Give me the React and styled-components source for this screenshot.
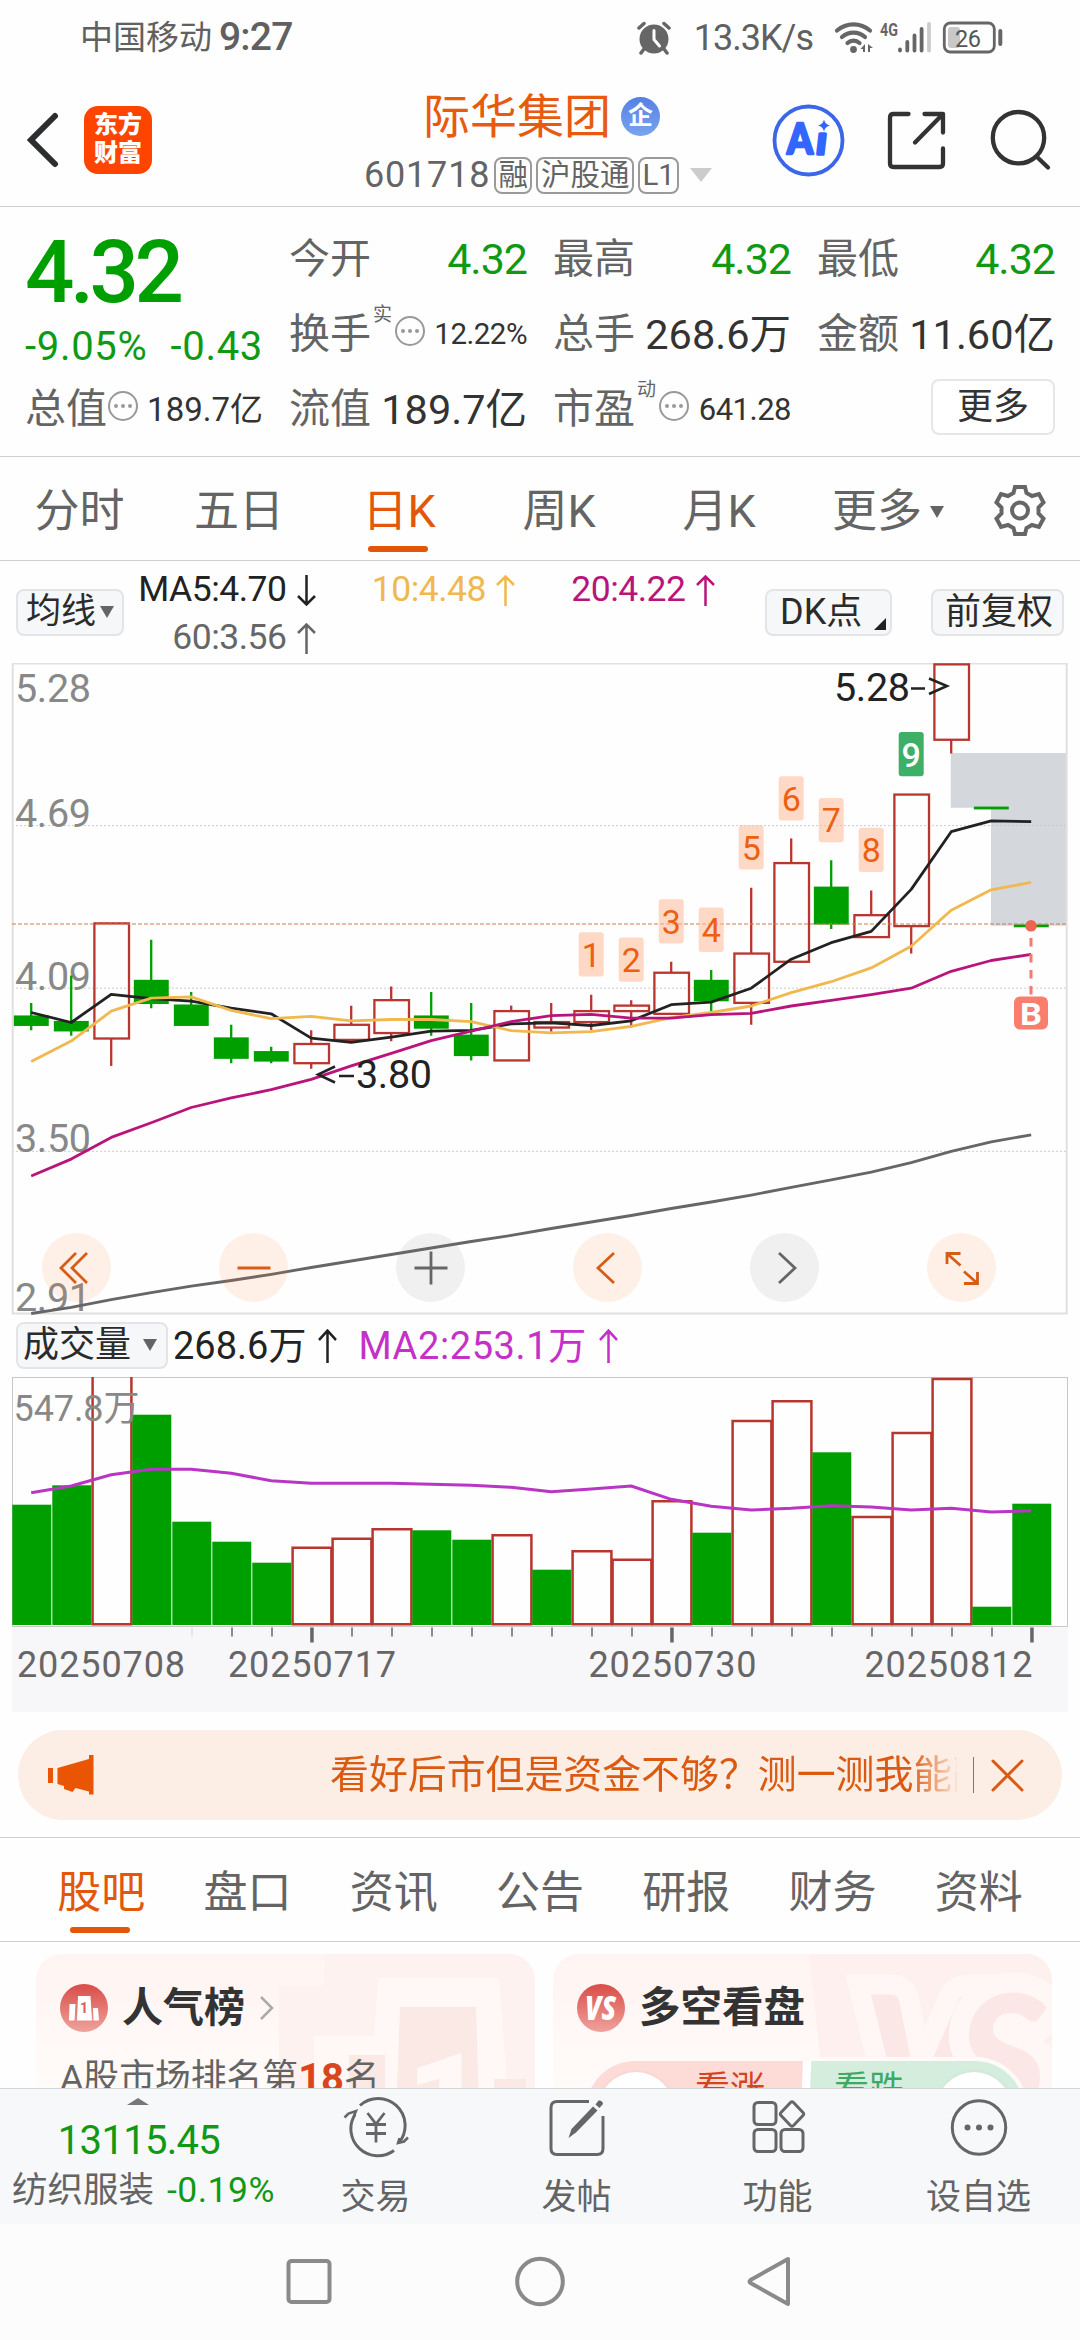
import styled, { createGlobalStyle, css } from 'styled-components'

const GREEN = '#009f00'
const TEXT_GREEN = '#109a14'
const RED = '#b9352f'
const ORANGE = '#e2570b'
const GREY = '#646464'
const INK = '#2b2b2b'

const GlobalStyle = createGlobalStyle`
* {
box-sizing: border-box;
}
body {
margin: 0;
background-color: #fff;
font-family: Roboto, 'Noto Sans CJK SC', sans-serif;
line-height: 1;
color: ${INK};
}
svg {
display: block;
flex: none;
}
`

const Page = styled.div`
width: 1080px;
height: 2340px;
display: flex;
flex-direction: column;
background-color: #fefefe;
overflow: hidden;
white-space: nowrap;
`

const T = styled.span`
font-size: ${p => p.$size}px;
color: ${p => p.$color || INK};
font-weight: ${p => p.$weight || 400};
letter-spacing: ${p => p.$ls || 0}px;
line-height: 1;
`

/* ---------- status bar ---------- */

const StatusBar = styled.header`
height: 75px;
padding: 0 76px 0 80px;
display: flex;
align-items: center;
justify-content: space-between;
`
const StatusGroup = styled.div`
display: flex;
align-items: center;
`
const Carrier = styled(T)`
margin-right: 7px;
`
const Speed = styled(T)`
margin: 0 21px 0 23px;
`

function StatusIcons() {
  return (
    <svg width="170" height="36" viewBox="833 19 170 36" fill="none">
      <g stroke="#666" strokeWidth="4.2" strokeLinecap="round">
        <path d="M836 29.5a25 25 0 0 1 33 0" />
        <path d="M841 36a17.5 17.5 0 0 1 23 0" />
        <path d="M846.5 42a9 9 0 0 1 12 0" />
      </g>
      <circle cx="852.5" cy="48.5" r="3.4" fill="#666" />
      <path d="M864 43v8h-2v-3h-2.5zM867 43v8h2v-4h3z" fill="#666" />
      <text x="879" y="34.5" fontSize="18" fontWeight="700" fill="#666" textLength="18" lengthAdjust="spacingAndGlyphs">4G</text>
      <g strokeWidth="3.8" strokeLinecap="round">
        <path d="M899 48.5v1M906.3 41v8.5M913.5 34.500v15M920.6 28v21.500" stroke="#666" />
        <path d="M928 23v26.500" stroke="#ccc" />
      </g>
      <rect x="947" y="26" width="12" height="21" rx="3" fill="#c8c8c8" />
      <rect x="943.300" y="22" width="50" height="29" rx="6" stroke="#666" strokeWidth="2.800" />
      <path d="M999.300 30v13" stroke="#666" strokeWidth="4" strokeLinecap="round" />
      <text x="954" y="45.500" fontSize="23.500" fill="#555" textLength="26">26</text>
    </svg>
  )
}

function AlarmIcon() {
  return (
    <svg width="34" height="34" viewBox="0 0 34 34" fill="none">
      <circle cx="17" cy="18" r="14.500" fill="#666" />
      <path d="M2 7l5-4.500M32 7l-5-4.500M7 28l-3 4M27 28l3 4" stroke="#666" strokeWidth="3.500" strokeLinecap="round" />
      <path d="M17 9.500v9l5.500 6.500" stroke="#fff" strokeWidth="3" strokeLinecap="round" strokeLinejoin="round" />
    </svg>
  )
}

/* ---------- header ---------- */

const Header = styled.div`
height: 132px;
padding: 0 28px 0 26px;
border-bottom: 1px solid #d0d0d0;
display: grid;
grid-template-columns: 338px 1fr 280px;
`
const HeaderLeft = styled.div`
display: flex;
align-items: center;
gap: 24px;
padding-bottom: 2px;
`
const Logo = styled.div`
width: 68px;
height: 68px;
border-radius: 14px;
background-color: #ff4400;
color: #fff;
font-weight: 800;
font-size: 24px;
line-height: 28.500px;
text-align: center;
padding-top: 5px;
`
const HeaderTitle = styled.div`
display: flex;
flex-direction: column;
`
const NameLine = styled.div`
height: 77px;
padding: 5px 0 0 59px;
display: flex;
align-items: center;
`
const EnterpriseBadge = styled.span`
width: 39px;
height: 39px;
border-radius: 50%;
margin-left: 10px;
background-image: linear-gradient(#5580e6, #79a4ee);
color: #fff;
font-size: 25px;
font-weight: 700;
line-height: 38px;
text-align: center;
`
const CodeLine = styled.div`
height: 46px;
display: flex;
align-items: center;
gap: 4px;
`
const Tag = styled.span`
height: 37px;
border: 2px solid #9a9a9a;
border-radius: 8px;
width: ${p => p.$w}px;
font-size: 29.500px;
line-height: 32px;
display: flex;
justify-content: center;
color: ${GREY};
`
const HeaderIcons = styled.div`
display: flex;
align-items: center;
justify-content: flex-end;
padding-bottom: 2px;
`

function HeaderActions() {
  return (
    <HeaderIcons>
      <svg width="282" height="76" viewBox="770 101 282 76" fill="none">
        <circle cx="808.500" cy="139.500" r="34" stroke="#3c66e8" strokeWidth="3.800" />
        <text x="787" y="153" fontFamily="Lato" fontWeight="900" fontSize="42" fill="#3366ff" stroke="#3366ff" strokeWidth="2.500" strokeLinejoin="round" textLength="26" lengthAdjust="spacingAndGlyphs">A</text>
        <text x="817" y="153" fontFamily="Lato" fontWeight="900" fontStyle="italic" fontSize="37" fill="#3366ff" stroke="#3366ff" strokeWidth="3.500" strokeLinejoin="round">ı</text>
        <path d="M824 118.500q1.200 5 6 6-4.800 1.200-6 6-1.200-4.800-6-6 4.800-1 6-6z" fill="#3366ff" />
        <g stroke="#333" strokeWidth="4.300" strokeLinecap="round" strokeLinejoin="round">
          <path d="M908.500 113h-15q-3.500 0-3.500 3.500v46q0 3.500 3.500 3.500h46q3.500 0 3.500-3.500v-15" />
          <path d="M924.500 113h18.500v18.500M943 113l-28 28.500" />
          <circle cx="1018.500" cy="136.700" r="25.700" />
          <path d="M1036.500 155.500l11.500 11" />
        </g>
      </svg>
    </HeaderIcons>
  )
}

/* ---------- quote ---------- */

const Quote = styled.section`
height: 250px;
border-bottom: 1px solid #d0d0d0;
padding: 15px 24px 0 25px;
display: grid;
grid-template-columns: repeat(4, 238px);
grid-template-rows: 75px 75px 75px;
column-gap: 26px;
`
const BigPrice = styled.div`
grid-row: 1 / span 2;
display: flex;
flex-direction: column;
`
const PriceRow = styled.div`
height: 100px;
display: flex;
align-items: center;
`
const ChangeRow = styled.div`
display: flex;
justify-content: space-between;
align-items: center;
height: 49px;
`
const Cell = styled.div`
display: flex;
align-items: center;
justify-content: space-between;
`
const Label = styled.span`
display: flex;
align-items: center;
font-size: 41px;
color: ${GREY};
`
const Sup = styled.span`
font-size: 19px;
height: 60px;
margin-left: 2px;
margin-right: 2px;
`
const DotsBadge = styled.span`
width: 30px;
height: 30px;
margin: -8px 0 0 1px;
border: 2.500px solid #999;
border-radius: 50%;
display: flex;
align-items: center;
justify-content: center;
gap: 3px;
&::before, &::after, i {
content: '';
width: 4px;
height: 4px;
border-radius: 50%;
background-color: #999;
}
`
const MoreButton = styled.button`
width: 124px;
height: 56px;
margin: -5px 0 0 auto;
padding: 0;
border: 2px solid #e4e6e8;
border-radius: 8px;
background-color: #fff;
font: inherit;
font-size: 36px;
color: #333;
`

const stats = [
  { label: '今开', value: '4.32', size: 43, color: TEXT_GREEN, ls: -1 },
  { label: '最高', value: '4.32', size: 43, color: TEXT_GREEN, ls: -1 },
  { label: '最低', value: '4.32', size: 43, color: TEXT_GREEN, ls: -1 },
  { label: '换手', sup: '实', dots: true, value: '12.22%', size: 29.5, ls: -0.5 },
  { label: '总手', value: '268.6万', size: 41.5 },
  { label: '金额', value: '11.60亿', size: 41.5 },
  { label: '总值', dots: true, value: '189.7亿', size: 33 },
  { label: '流值', value: '189.7亿', size: 41.5 },
  { label: '市盈', sup: '动', dots: true, value: '641.28', size: 31, ls: -0.5 }
]

/* ---------- tabs ---------- */

const Tabs = styled.nav`
height: 104px;
border-bottom: 1px solid #d0d0d0;
padding: 0 ${p => p.$pad}px;
display: flex;
`
const Tab = styled.span`
position: relative;
width: ${p => p.$w}px;
padding-top: 6px;
display: flex;
align-items: center;
justify-content: center;
font-size: ${p => p.$size || 45}px;
color: ${GREY};
${p => p.$active && css`
color: ${ORANGE};
&::after {
content: '';
position: absolute;
left: 50%;
bottom: 8px;
width: 60px;
height: 6px;
margin-left: -31px;
border-radius: 3px;
background-color: #e25608;
}
`}
`
const Caret = styled.i`
border: solid transparent;
border-width: ${p => p.$h || 12}px ${p => p.$half || 7.5}px 0;
border-top-color: ${p => p.$color || GREY};
margin-left: ${p => p.$ml || 0}px;
`

function GearIcon() {
  return (
    <svg width="54" height="54" viewBox="-28 -25.500 54 54" fill="none" stroke="#666" strokeWidth="4" strokeLinejoin="miter">
      <path d="M-5 -23.500H5L6.500 -17.500L12 -14.500L19 -16.500L23.500 -8L18.500 -3V3L23.500 8L19 16.500L12 14.500L6.500 17.500L5 23.500H-5L-6.500 17.500L-12 14.500L-19 16.500L-23.500 8L-18.500 3V-3L-23.500 -8L-19 -16.500L-12 -14.500L-6.500 -17.500Z" />
      <circle r="8" />
    </svg>
  )
}

/* ---------- moving averages ---------- */

const Legend = styled.div`
height: 102px;
padding: 0 16px;
display: flex;
align-items: center;
`
const Chip = styled.span`
width: ${p => p.$w}px;
height: 47px;
padding: 0 0 1px ${p => p.$pl}px;
margin-left: ${p => p.$ml || 0}px;
border: 2px solid #e2e4e7;
border-radius: 8px;
background-color: #f6f7f9;
display: flex;
align-items: center;
font-size: ${p => p.$size || 36}px;
`
const Averages = styled.div`
width: 641px;
height: 96px;
margin-left: -8px;
display: grid;
grid-template-columns: repeat(3, 199.500px);
grid-template-rows: 48px 48px;
padding-top: 2px;
`
const Average = styled.span`
display: flex;
align-items: center;
justify-content: flex-end;
gap: 10px;
font-size: 35.500px;
letter-spacing: -0.500px;
color: ${p => p.$color};
`
const Corner = styled.i`
margin: 24px 4px 0 auto;
border: solid transparent;
border-width: 0 0 12px 12px;
border-bottom-color: #222;
`

function Arrow({ down, big }) {
  const h = big ? 34 : 31
  return (
    <svg width="19" height={h} viewBox="0 0 19 31" preserveAspectRatio="none" fill="none" stroke="currentColor" strokeWidth="2.500">
      <path d={down ? 'M9.500 0v29.500M1 21l8.500 8.500L18 21' : 'M9.500 31V1.500M1 10l8.500-8.500L18 10'} />
    </svg>
  )
}

/* ---------- candles ---------- */

const TOP_PRICE = 5.28
const PX_PER_UNIT = 274.1
const cx = i => 31.200 + 40 * i
const py = price => (TOP_PRICE - price) * PX_PER_UNIT

// [up, high, top, bottom, low]
const candles = [
  [0, 4.04, 3.99, 3.96, 3.94], [0, 4.14, 3.97, 3.94, 3.92], [1, 4.33, 4.33, 3.91, 3.81],
  [0, 4.27, 4.12, 4.04, 4.02], [0, 4.08, 4.03, 3.96, 3.96], [0, 3.96, 3.91, 3.84, 3.82],
  [0, 3.88, 3.86, 3.83, 3.82], [1, 3.94, 3.89, 3.82, 3.8], [1, 4.03, 3.96, 3.905, 3.9],
  [1, 4.1, 4.05, 3.93, 3.9], [0, 4.08, 3.99, 3.95, 3.92], [0, 4.04, 3.92, 3.85, 3.83],
  [1, 4.03, 4.01, 3.83, 3.83], [1, 4.04, 3.97, 3.95, 3.935], [1, 4.07, 4.01, 3.97, 3.94],
  [1, 4.05, 4.03, 4.01, 3.95], [1, 4.19, 4.15, 4, 4], [0, 4.16, 4.12, 4.05, 4.01],
  [1, 4.46, 4.22, 4.04, 3.96], [1, 4.64, 4.55, 4.19, 4.19], [0, 4.56, 4.46, 4.33, 4.31],
  [1, 4.45, 4.36, 4.28, 4.28], [1, 4.8, 4.8, 4.32, 4.22], [1, 5.275, 5.275, 5, 4.95],
  [0, 4.752, 4.752, 4.75, 4.75], [0, 4.322, 4.322, 4.32, 4.32]
]

const averages = [
  { color: '#666', ys: [650.5, 644.4, 636.6, 629.7, 623.2, 617.5, 611.4, 604.5, 598, 591.5, 585, 578.5, 572.4, 565.5, 559, 552.5, 545.5, 539, 532.1, 524.3, 516.9, 509.1, 499.6, 488.3, 478.8, 471.8] },
  { color: '#222', ys: [349.5, 359.5, 331.3, 335.6, 338.2, 345.2, 350.8, 375.1, 379.4, 374.2, 368.2, 367.3, 360.8, 359.9, 362.5, 357.8, 341.7, 339.1, 325.2, 296.2, 279.7, 268.4, 226.4, 168.7, 157.8, 158.7] },
  { color: '#f0b84e', ys: [398.5, 378.1, 348.2, 335.2, 333.9, 347.4, 355.6, 353.4, 357.8, 356.5, 356.5, 358.6, 367.7, 369.9, 368.6, 363.4, 354.7, 349.5, 343, 329.6, 318.7, 304.9, 283.2, 247.2, 226.8, 219.4] },
  { color: '#b9147c', ys: [513, 496.1, 474.4, 459.7, 444.5, 434.9, 426.7, 416.3, 402.9, 390.3, 377.7, 368.2, 358.6, 352.6, 351.3, 355.2, 355.2, 351.7, 350.4, 343, 337.4, 331.7, 325.2, 308.3, 297.5, 291.4] }
]

const priceLabels = [['5.28', 39], ['4.69', 164], ['4.09', 327], ['3.50', 489], ['2.91', 648]]
const countTops = [269.3, 274.5, 236.3, 244.6, 162.2, 113.2, 134.9, 164.8, 69]

const points = ys => ys.map((y, i) => `${cx(i)},${y}`).join(' ')

const ChartBox = styled.section`
position: relative;
height: 652px;
`
const Controls = styled.div`
position: absolute;
left: 42px;
bottom: 13px;
display: flex;
gap: 108px;
`
const Control = styled.span`
width: 69px;
height: 69px;
border-radius: 50%;
background-color: ${p => (p.$muted ? 'rgba(120, 120, 120, 0.1)' : 'rgba(255, 125, 50, 0.11)')};
color: ${p => (p.$muted ? '#666' : '#d75c17')};
display: flex;
align-items: center;
justify-content: center;
`

const controls = [
  { d: 'M18 4L3 19l15 15M29 4L14 19l15 15' },
  { d: 'M2.500 19h33' },
  { d: 'M2.500 19h33M19 2.500v33', muted: true },
  { d: 'M25 4L9 19l16 15' },
  { d: 'M13 4l16 15-16 15', muted: true },
  { d: 'M4 15V4.500h13.500M4.500 5l13 11.500M34.500 23v11.500H21M34 34L21 22.500' }
]

function CandleChart() {
  return (
    <ChartBox>
      <svg width="1080" height="652" viewBox="0 0 1080 652" fill="none">
        <path d="M950.800 90H1067v172.800H991V144.700H950.800z" fill="#d4d7dc" />
        {[162.6, 325.2, 488.3].map(y => (
          <path key={y} d={`M12 ${y}H1067`} stroke="#ccc" strokeWidth="1" strokeDasharray="2 2" />
        ))}
        <rect x="12.700" y="0.500" width="1054" height="650" stroke="#e0e0e0" strokeWidth="2" />
        {priceLabels.map(([label, y]) => (
          <text key={label} x="15" y={y} fontSize="39.500" fill="#888" textLength="76">{label}</text>
        ))}
        {candles.map(([up, high, top, bottom, low], i) => (
          <g key={i} stroke={up ? RED : GREEN} strokeWidth="2.300">
            <path d={`M${cx(i)} ${py(high)}V${py(top)}M${cx(i)} ${py(bottom)}V${py(low)}`} />
            <rect
              x={cx(i) - (up ? 16.8 : 16.2)}
              y={py(top)}
              width={up ? 34.6 : 32.6}
              height={py(bottom) - py(top)}
              fill={up ? 'none' : GREEN}
            />
          </g>
        ))}
        <path d="M12 261H1067" stroke="#cf7b4e" strokeWidth="1.200" strokeDasharray="4 2" />
        {averages.map(({ color, ys }) => (
          <polyline key={color} points={points(ys)} stroke={color} strokeWidth="2.800" strokeLinejoin="round" />
        ))}
        {countTops.map((y, i) => {
          const last = i === 8
          const x = cx(i + 14)
          return (
            <g key={i}>
              <rect x={x - 12.5} y={y} width="25" height="44.300" rx="3" fill={last ? '#3daf66' : 'rgba(255, 185, 150, 0.55)'} />
              <text x={x} y={y + 34.500} fontSize="34" textAnchor="middle" fill={last ? '#fff' : '#ec5f14'} fontWeight={last ? 500 : 400}>{i + 1}</text>
            </g>
          )
        })}
        <g fontSize="39.500" fill="#222">
          <text x="356" y="425" textLength="76">3.80</text>
          <text x="834" y="37.500" textLength="76">5.28</text>
        </g>
        <path d="M335 403.500L318 411.500L335 419.500M339 413h15" stroke="#222" strokeWidth="2.500" />
        <path d="M929 15.500L947 23L929 31M911 25.500h14" stroke="#222" strokeWidth="2.500" />
        <circle cx="1031" cy="262.800" r="5.800" fill="#ee6450" />
        <path d="M1031 275v57" stroke="#ef7d6d" strokeWidth="3" strokeDasharray="8.500 7.500" />
        <rect x="1014" y="333.500" width="34" height="33" rx="6" fill="#f97e6d" />
        <text x="1020" y="361.500" fontSize="32" fontWeight="700" fill="#fff" textLength="22" lengthAdjust="spacingAndGlyphs">B</text>
      </svg>
      <Controls>
        {controls.map(({ d, muted }) => (
          <Control key={d} $muted={muted}>
            <svg width="38" height="38" viewBox="0 0 38 38" fill="none" stroke="currentColor" strokeWidth="2.800">
              <path d={d} />
            </svg>
          </Control>
        ))}
      </Controls>
    </ChartBox>
  )
}

/* ---------- volume ---------- */

const VolumeLegend = styled.div`
height: 62px;
padding: 0 16px 1px;
display: flex;
align-items: center;
`
const VolumeText = styled.span`
display: flex;
align-items: center;
gap: 12px;
margin-left: ${p => p.$ml}px;
font-size: 38px;
letter-spacing: ${p => p.$ls || 0}px;
color: ${p => p.$color};
`

// [up, top edge of the bar]
const volumes = [
  [0, 127.7], [0, 108.3], [1, -3], [0, 37.7], [0, 144.7], [0, 164.7], [0, 185.7],
  [1, 170.7], [1, 161.7], [1, 152.3], [0, 153.3], [0, 162.7], [1, 158.3], [0, 192.7],
  [1, 174.3], [1, 182.7], [1, 124.3], [0, 155.7], [1, 44], [1, 24.3], [0, 75.3],
  [1, 140], [1, 56], [1, 2], [0, 229.7], [0, 126.7]
]
const volumeAverage = [115.7, 109, 97.7, 92.3, 92.3, 96.3, 103.7, 106.3, 106.3, 106.3, 107.3, 108.3, 110.3, 114.7, 112, 109, 122.3, 129.3, 133, 131.3, 128.7, 130, 133, 131.3, 135, 133.7]
const dates = [['20250708', 17], ['20250717', 228], ['20250730', 588.5], ['20250812', 864.5]]

function VolumeChart() {
  return (
    <svg width="1080" height="335" viewBox="0 0 1080 335" fill="none">
      <rect x="12" y="250" width="1056" height="85" fill="#f7f7fa" />
      <rect x="12.500" y="0.500" width="1055" height="249" stroke="#c8c8c8" />
      {volumes.map(([up, y], i) => (
        up
          ? <path key={i} d={`M${12.6 + 40 * i} ${Math.max(y, 0)}V247.300h38.800V${Math.max(y, 0)}${y > 0 ? 'z' : ''}`} stroke={RED} strokeWidth="2.500" />
          : <rect key={i} x={12.300 + 40 * i} y={y} width="39" height={248 - y} fill={GREEN} />
      ))}
      <polyline points={points(volumeAverage)} stroke="#b936c4" strokeWidth="3" strokeLinejoin="round" />
      <text x="13.500" y="44" fontSize="36" fill="#888" textLength="126">547.8万</text>
      {volumes.map((_, i) => {
        if (i < 4) return null
        const major = i === 7 || i === 16 || i === 25
        return (
          <rect key={i} x={cx(i) - (major ? 1 : 0.2)} y="250.500" width={major ? 3.500 : 2} height={major ? 15 : 9} fill={i === 4 ? '#e6e6e8' : major ? '#666' : '#8c8c8c'} />
        )
      })}
      {dates.map(([date, x]) => (
        <text key={date} x={x} y="299.500" fontSize="36" fill="#666" textLength="168">{date}</text>
      ))}
    </svg>
  )
}

/* ---------- promo banner ---------- */

const Banner = styled.div`
height: 90px;
margin: 18px 18px 17px;
padding: 0 38px 0 30px;
border-radius: 45px;
background-color: #fceee5;
display: flex;
align-items: center;
`
const BannerText = styled.div`
width: 628px;
margin-left: 236px;
overflow: hidden;
font-size: 38.900px;
line-height: 60px;
color: #db5a12;
mask-image: linear-gradient(to right, #000 580px, transparent 630px);
`
const Divider = styled.i`
width: 1px;
height: 36px;
margin: 0 17px 0 16px;
background-color: #c8622c;
`

/* ---------- cards ---------- */

const Cards = styled.section`
height: 146px;
padding: 12px 28px 0 36px;
display: grid;
grid-template-columns: 499px 499px;
column-gap: 18px;
overflow: hidden;
`
const Card = styled.article`
position: relative;
height: 220px;
border-radius: 26px;
padding: 24px;
overflow: hidden;
background-image: linear-gradient(#fff4f2, #fffbf9 60%);
`
const CardArt = styled.svg`
position: absolute;
left: 0;
top: 0;
`
const CardHead = styled.div`
position: relative;
height: 60px;
display: flex;
align-items: center;
gap: 14px;
`
const RankText = styled.p`
position: relative;
margin: 20px 0 0;
height: 42px;
display: flex;
align-items: center;
font-size: 35.800px;
color: ${GREY};
`
const Vote = styled.div`
position: relative;
height: 106px;
margin: 19px 0 0 5px;
width: 446px;
border: 4px solid #fffafa;
border-radius: 53px;
overflow: hidden;
display: flex;
justify-content: space-between;
background-color: #fff;
`
const Side = styled.div`
width: ${p => p.$w}px;
height: 100px;
padding: 11px 12px 0;
display: flex;
align-items: flex-start;
justify-content: space-between;
flex-direction: ${p => (p.$up ? 'row' : 'row-reverse')};
background-color: ${p => (p.$up ? '#fddcd8' : '#d5eddd')};
color: ${p => (p.$up ? '#d2451e' : '#3fa866')};
font-size: 35px;
line-height: 36px;
clip-path: ${p => (p.$up ? 'polygon(0 0, 100% 0, 98% 100%, 0 100%)' : 'polygon(2% 0, 100% 0, 100% 100%, 0 100%)')};
`
const Knob = styled.i`
width: 76px;
height: 76px;
border-radius: 50%;
background-color: #fff;
box-shadow: 0 0 4px rgba(0, 0, 0, 0.06);
`
const SideText = styled.span`
padding: 0 ${p => p.$pr || 0}px 0 ${p => p.$pl || 0}px;
`

function RankBadge() {
  return (
    <svg width="48" height="48" viewBox="0 0 48 48">
      <defs>
        <linearGradient id="badge" x1="0" y1="0" x2="0" y2="1">
          <stop offset="0" stopColor="#d84c48" />
          <stop offset="1" stopColor="#f0a29c" />
        </linearGradient>
      </defs>
      <circle cx="24" cy="24" r="24" fill="url(#badge)" />
      <path d="M9.500 20h6l-1 16.500H9zM18 12h12.500L32 36.500H17zM33 24h5l1 12.500h-5.500z" fill="#fff" />
      <text x="24" y="29" fontSize="14" fontWeight="700" textAnchor="middle" fill="#d9605b">1</text>
    </svg>
  )
}

function VsBadge() {
  return (
    <svg width="48" height="48" viewBox="0 0 48 48">
      <circle cx="24" cy="24" r="24" fill="url(#badge)" />
      <text x="8" y="36" fontFamily="Open Sans" fontSize="33" fontWeight="800" fontStyle="italic" fill="#fff" textLength="31" lengthAdjust="spacingAndGlyphs">VS</text>
    </svg>
  )
}

/* ---------- bottom bar ---------- */

const BottomBar = styled.footer`
height: 136px;
border-top: 1px solid #d2d5da;
background-color: #f7f8fa;
display: grid;
grid-template-columns: 275px repeat(4, 201px);
`
const Sector = styled.div`
display: flex;
flex-direction: column;
align-items: center;
padding-top: 9px;
`
const UpCaret = styled.i`
border: solid transparent;
border-width: 0 11px 7px;
border-bottom-color: #777;
`
const SectorValue = styled(T)`
margin: 16px 0 12px 3px;
`
const SectorRow = styled.div`
display: flex;
align-items: center;
gap: 13px;
padding-left: 12px;
`
const Action = styled.div`
display: flex;
flex-direction: column;
align-items: center;
padding-top: 8px;
gap: 21px;
font-size: 35px;
color: ${GREY};
`
const NavBar = styled.div`
height: 116px;
background-color: #fcfcfc;
display: flex;
justify-content: center;
padding-top: 31px;
`

const actions = [
  {
    label: '交易',
    icon: (
      <>
        <path d="M19 8.500A27 27 0 0 1 58.500 45M14 17.500A27 27 0 0 0 53 53.500" />
        <path d="M3.500 20.500l4-4 7.500-2.500-2 5M67 40.500l-4 4-6 1.500 1.500-5" strokeWidth="2.500" />
        <path d="M26.500 16l8.500 11 8.500-11M25 27.500h20M25 36.500h20M35 27v18.500" strokeWidth="2.800" />
      </>
    )
  },
  {
    label: '发帖',
    icon: (
      <>
        <path d="M47 4.500H15q-6 0-6 6v41q0 6 6 6h40q6 0 6-6V19" />
        <path d="M26.500 41l3-9L51 9.500l4.500 4L34 35.500z" fill="#666" stroke="none" />
        <path d="M53.500 7.500l3-4q4-.5 4.500 3.500l-3.500 4z" fill="#666" stroke="none" />
      </>
    )
  },
  {
    label: '功能',
    icon: (
      <>
        <rect x="11" y="5.500" width="22" height="22" rx="4" />
        <rect x="11" y="32.500" width="22" height="22" rx="4" />
        <rect x="38" y="32.500" width="22" height="22" rx="4" />
        <path d="M47.500 5.500q1.500-1.500 3 0l9.500 10q1.500 1.500 0 3l-9.500 10q-1.500 1.500-3 0l-9.500-10q-1.500-1.500 0-3z" />
      </>
    )
  },
  {
    label: '设自选',
    icon: (
      <>
        <circle cx="35" cy="30.500" r="26.700" />
        <g fill="#666" stroke="none">
          <circle cx="23.500" cy="30.500" r="3" />
          <circle cx="35" cy="30.500" r="3" />
          <circle cx="46.500" cy="30.500" r="3" />
        </g>
      </>
    )
  }
]

function App() {
  return (
    <Page>
      <GlobalStyle />
      <StatusBar>
        <StatusGroup>
          <Carrier $size={33} $color="#606060">中国移动</Carrier>
          <T $size={39} $color="#606060" $weight={500} $ls={-0.8}>9:27</T>
        </StatusGroup>
        <StatusGroup>
          <AlarmIcon />
          <Speed $size={36} $color="#606060" $ls={-1}>13.3K/s</Speed>
          <StatusIcons />
        </StatusGroup>
      </StatusBar>

      <Header>
        <HeaderLeft>
          <svg width="34" height="58" viewBox="0 0 34 58" fill="none" stroke="#2b2d2e" strokeWidth="6" strokeLinecap="round">
            <path d="M29 5L5 29l24 24" />
          </svg>
          <Logo>东方<br />财富</Logo>
        </HeaderLeft>
        <HeaderTitle>
          <NameLine>
            <T $size={47} $color="#e85a0e">际华集团</T>
            <EnterpriseBadge>企</EnterpriseBadge>
          </NameLine>
          <CodeLine>
            <T $size={36} $color={GREY} $ls={0.8}>601718</T>
            <Tag $w={38}>融</Tag>
            <Tag $w={98}>沪股通</Tag>
            <Tag $w={41}>L1</Tag>
            <Caret $h={14} $half={11} $color="#ccc" $ml={7} />
          </CodeLine>
        </HeaderTitle>
        <HeaderActions />
      </Header>

      <Quote>
        <BigPrice>
          <PriceRow><T $size={87} $color={GREEN} $weight={500} $ls={-4.5}>4.32</T></PriceRow>
          <ChangeRow>
            <T $size={40} $color={TEXT_GREEN} $ls={0.7}>-9.05%</T>
            <T $size={40} $color={TEXT_GREEN} $ls={0.7}>-0.43</T>
          </ChangeRow>
        </BigPrice>
        {stats.map(({ label, sup, dots, value, size, color, ls }) => (
          <Cell key={label}>
            <Label>
              {label}
              {sup && <Sup>{sup}</Sup>}
              {dots && <DotsBadge><i /></DotsBadge>}
            </Label>
            <T $size={size} $color={color || '#333'} $ls={ls}>{value}</T>
          </Cell>
        ))}
        <Cell><MoreButton>更多</MoreButton></Cell>
      </Quote>

      <Tabs $pad={0}>
        <Tab $w={159}>分时</Tab>
        <Tab $w={160}>五日</Tab>
        <Tab $w={160} $active>日K</Tab>
        <Tab $w={160}>周K</Tab>
        <Tab $w={160}>月K</Tab>
        <Tab $w={178}>更多<Caret $ml={8} /></Tab>
        <Tab $w={84}><GearIcon /></Tab>
      </Tabs>

      <Legend>
        <Chip $w={108} $pl={8} $size={35}>均线<Caret $ml={4} /></Chip>
        <Averages>
          <Average $color="#222">MA5:4.70<Arrow down /></Average>
          <Average $color="#f0b84e">10:4.48<Arrow /></Average>
          <Average $color="#b9147c">20:4.22<Arrow /></Average>
          <Average $color="#666">60:3.56<Arrow /></Average>
        </Averages>
        <Chip $w={127} $pl={13} $ml={8}>DK点<Corner /></Chip>
        <Chip $w={133} $pl={12} $ml={39}>前复权</Chip>
      </Legend>

      <CandleChart />

      <VolumeLegend>
        <Chip $w={152} $pl={5}>成交量<Caret $ml={12} /></Chip>
        <VolumeText $ml={5} $color="#222">268.6万<Arrow big /></VolumeText>
        <VolumeText $ml={21} $color="#c430c8" $ls={0.6}>MA2:253.1万<Arrow big /></VolumeText>
      </VolumeLegend>
      <VolumeChart />

      <Banner>
        <svg width="46" height="40" viewBox="0 0 46 40" fill="#ea5504">
          <path d="M0 13h5v15H0zM9.500 13L41 4V0h4.500v39.500H41V36.500L27.500 33l-3 4-8.500-3v-3l-6.500-2z" />
        </svg>
        <BannerText>{'看好后市但是资金不够\uFF1F测一测我能融'}</BannerText>
        <Divider />
        <svg width="33" height="33" viewBox="0 0 33 33" stroke="#db5a12" strokeWidth="3" strokeLinecap="round">
          <path d="M2 2l29 29M31 2L2 31" />
        </svg>
      </Banner>

      <Tabs $pad={28} style={{ borderTop: '1px solid #d0d0d0', height: 105 }}>
        {['股吧', '盘口', '资讯', '公告', '研报', '财务', '资料'].map((name, i) => (
          <Tab key={name} $w={146.3} $size={44} $active={i === 0}>{name}</Tab>
        ))}
      </Tabs>

      <Cards>
        <Card>
          <CardArt width="499" height="220" viewBox="0 0 499 220">
            <path d="M290 0H499V220H243V32H287z" fill="#fdf2f0" />
            <path d="M342 24H463L478 220H278V82H338z" fill="#fff8f6" />
            <path d="M364 53H440L445 220H358zM313 101H349V220H313zM458 125H490V220H458z" fill="#fbe9e6" />
            <text x="370" y="196" fontSize="136" fontWeight="900" fill="#fff8f6">1</text>
          </CardArt>
          <CardHead>
            <RankBadge />
            <T $size={41} $color="#333" $weight={600}>人气榜</T>
            <svg width="15" height="26" viewBox="0 0 15 26" fill="none" stroke="#aaa" strokeWidth="2.500">
              <path d="M2 2l11 11L2 24" />
            </svg>
          </CardHead>
          <RankText>A股市场排名第<T $size={40} $color="#d9461c" $weight={700}>18</T>名</RankText>
        </Card>
        <Card>
          <CardArt width="499" height="220" viewBox="0 0 499 220">
            <path d="M256 0H499V220H280z" fill="#fdf0ee" />
            <text x="310" y="168" fontFamily="Lato" fontSize="175" fontWeight="900" fontStyle="italic" fill="#fbe8e6" stroke="#fff7f5" strokeWidth="40" strokeLinejoin="miter" paintOrder="stroke" textLength="184">VS</text>
          </CardArt>
          <CardHead>
            <VsBadge />
            <T $size={41.5} $color="#333" $weight={600}>多空看盘</T>
          </CardHead>
          <Vote>
            <Side $up $w={217}>
              <Knob />
              <SideText $pr={26}>看涨</SideText>
            </Side>
            <Side $w={217}>
              <Knob />
              <SideText $pl={15}>看跌</SideText>
            </Side>
          </Vote>
        </Card>
      </Cards>

      <BottomBar>
        <Sector>
          <UpCaret />
          <SectorValue $size={40} $color={TEXT_GREEN} $ls={-0.7}>13115.45</SectorValue>
          <SectorRow>
            <T $size={35.5} $color={GREY}>纺织服装</T>
            <T $size={35.5} $color={TEXT_GREEN} $ls={0.5}>-0.19%</T>
          </SectorRow>
        </Sector>
        {actions.map(({ label, icon }) => (
          <Action key={label}>
            <svg width="70" height="62" viewBox="0 0 70 62" fill="none" stroke="#666" strokeWidth="3">{icon}</svg>
            {label}
          </Action>
        ))}
      </BottomBar>

      <NavBar>
        <svg width="510" height="54" viewBox="285 2255 510 54" fill="none" stroke="#8a8a8a" strokeWidth="4">
          <rect x="288.500" y="2261" width="41" height="41" rx="3" />
          <circle cx="540" cy="2281.500" r="22.800" />
          <path d="M788 2259v45L750.500 2283q-2-1.500 0-3z" strokeLinejoin="round" />
        </svg>
      </NavBar>
    </Page>
  )
}

export default App
